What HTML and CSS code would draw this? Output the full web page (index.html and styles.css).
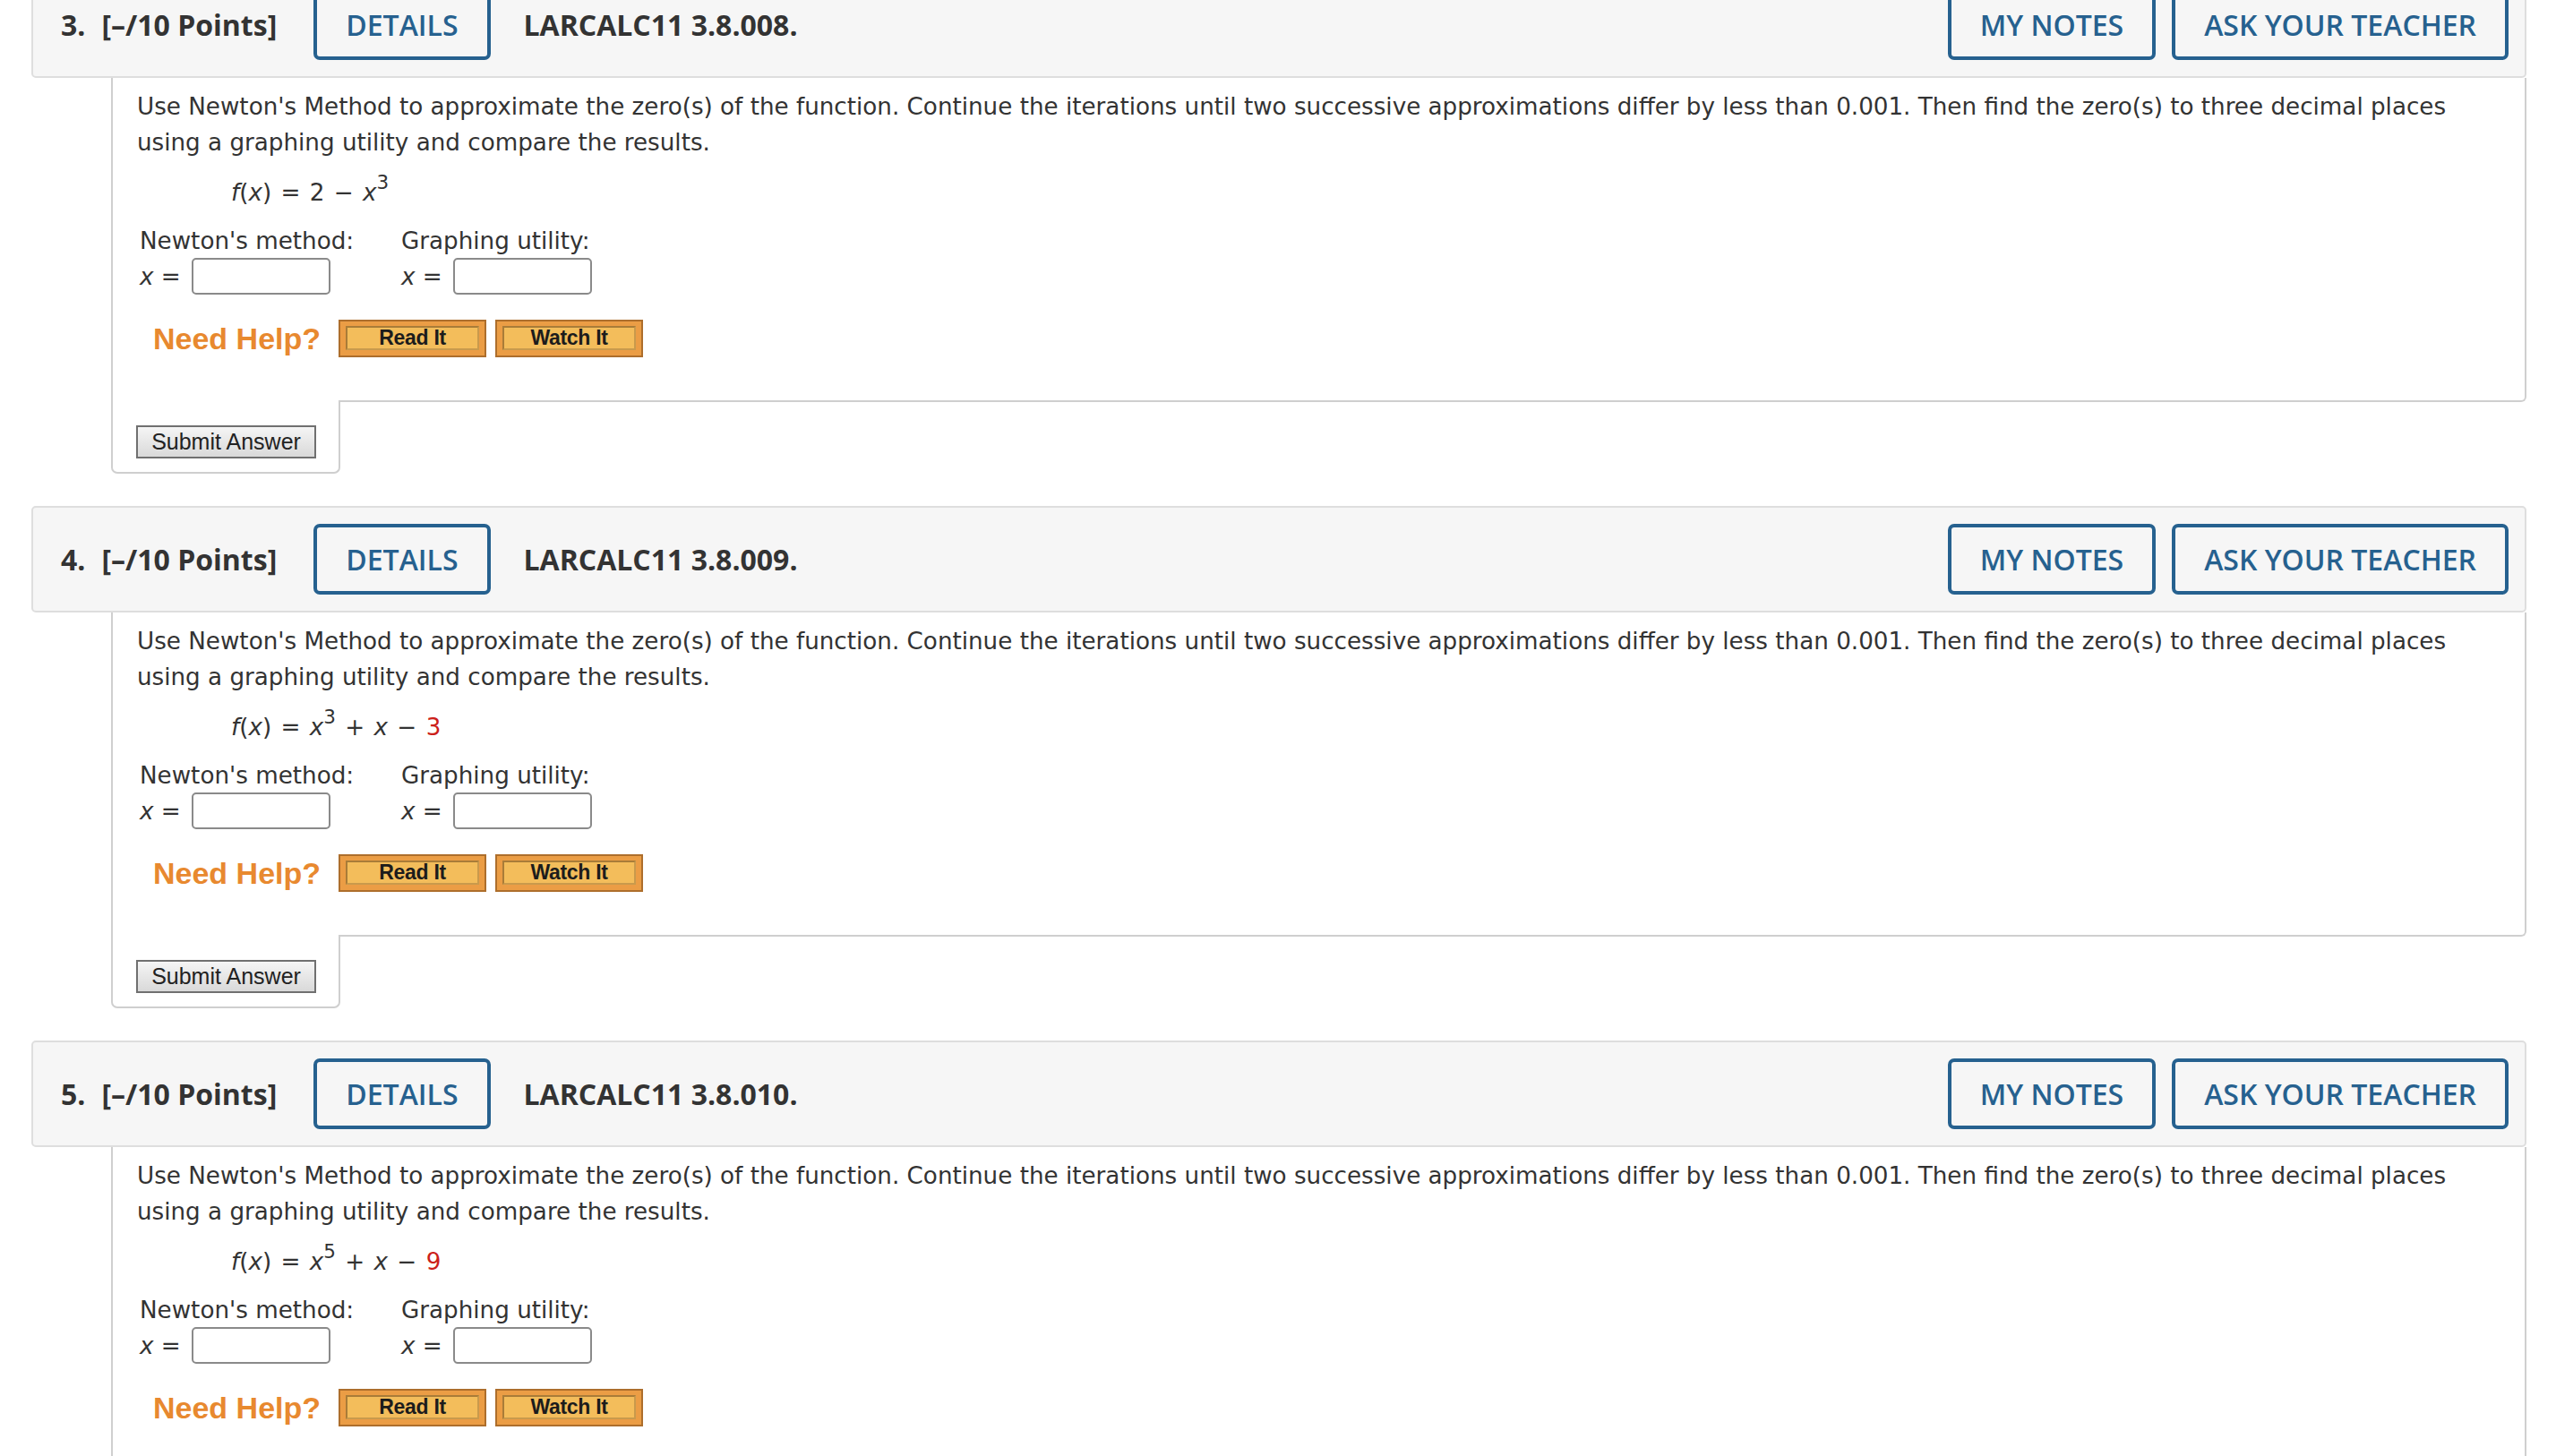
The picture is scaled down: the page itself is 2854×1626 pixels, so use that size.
FILE: index.html
```html
<!DOCTYPE html>
<html lang="en">
<head>
<meta charset="utf-8">
<title>Questions</title>
<link rel="stylesheet" href="styles.css">
</head>
<body>
<div class="page">

  <section class="q">
    <div class="qhead">
      <span class="qnum">3.</span><span class="pts">[–/10 Points]</span>
      <button class="btn details">DETAILS</button>
      <span class="qref">LARCALC11 3.8.008.</span>
      <span class="spacer"></span>
      <button class="btn notes">MY NOTES</button>
      <button class="btn">ASK YOUR TEACHER</button>
    </div>
    <div class="qbody">
      <p class="prompt">Use Newton's Method to approximate the zero(s) of the function. Continue the iterations until two successive approximations differ by less than 0.001. Then find the zero(s) to three decimal places using a graphing utility and compare the results.</p>
      <div class="formula"><i>f</i>(<i>x</i>) = 2 − <i>x</i><sup>3</sup></div>
      <div class="answers">
        <div class="col col1"><div class="lab">Newton's method:</div><div class="xrow"><span class="xeq"><i>x</i> =</span><input class="ans" type="text"></div></div>
        <div class="col"><div class="lab">Graphing utility:</div><div class="xrow"><span class="xeq"><i>x</i> =</span><input class="ans" type="text"></div></div>
      </div>
      <div class="help">
        <span class="need">Need Help?</span>
        <span class="hbtn"><span>Read It</span></span>
        <span class="hbtn"><span>Watch It</span></span>
      </div>
    </div>
    <div class="qfoot"><button class="submit">Submit Answer</button></div>
  </section>

  <section class="q">
    <div class="qhead">
      <span class="qnum">4.</span><span class="pts">[–/10 Points]</span>
      <button class="btn details">DETAILS</button>
      <span class="qref">LARCALC11 3.8.009.</span>
      <span class="spacer"></span>
      <button class="btn notes">MY NOTES</button>
      <button class="btn">ASK YOUR TEACHER</button>
    </div>
    <div class="qbody">
      <p class="prompt">Use Newton's Method to approximate the zero(s) of the function. Continue the iterations until two successive approximations differ by less than 0.001. Then find the zero(s) to three decimal places using a graphing utility and compare the results.</p>
      <div class="formula"><i>f</i>(<i>x</i>) = <i>x</i><sup>3</sup> + <i>x</i> − <span class="red">3</span></div>
      <div class="answers">
        <div class="col col1"><div class="lab">Newton's method:</div><div class="xrow"><span class="xeq"><i>x</i> =</span><input class="ans" type="text"></div></div>
        <div class="col"><div class="lab">Graphing utility:</div><div class="xrow"><span class="xeq"><i>x</i> =</span><input class="ans" type="text"></div></div>
      </div>
      <div class="help">
        <span class="need">Need Help?</span>
        <span class="hbtn"><span>Read It</span></span>
        <span class="hbtn"><span>Watch It</span></span>
      </div>
    </div>
    <div class="qfoot"><button class="submit">Submit Answer</button></div>
  </section>

  <section class="q">
    <div class="qhead">
      <span class="qnum">5.</span><span class="pts">[–/10 Points]</span>
      <button class="btn details">DETAILS</button>
      <span class="qref">LARCALC11 3.8.010.</span>
      <span class="spacer"></span>
      <button class="btn notes">MY NOTES</button>
      <button class="btn">ASK YOUR TEACHER</button>
    </div>
    <div class="qbody">
      <p class="prompt">Use Newton's Method to approximate the zero(s) of the function. Continue the iterations until two successive approximations differ by less than 0.001. Then find the zero(s) to three decimal places using a graphing utility and compare the results.</p>
      <div class="formula"><i>f</i>(<i>x</i>) = <i>x</i><sup>5</sup> + <i>x</i> − <span class="red">9</span></div>
      <div class="answers">
        <div class="col col1"><div class="lab">Newton's method:</div><div class="xrow"><span class="xeq"><i>x</i> =</span><input class="ans" type="text"></div></div>
        <div class="col"><div class="lab">Graphing utility:</div><div class="xrow"><span class="xeq"><i>x</i> =</span><input class="ans" type="text"></div></div>
      </div>
      <div class="help">
        <span class="need">Need Help?</span>
        <span class="hbtn"><span>Read It</span></span>
        <span class="hbtn"><span>Watch It</span></span>
      </div>
    </div>
    <div class="qfoot"><button class="submit">Submit Answer</button></div>
  </section>

</div>
</body>
</html>
```

FILE: styles.css
```css
html, body {
  margin: 0;
  padding: 0;
  background: #ffffff;
}

body {
  font-family: "DejaVu Sans", Verdana, sans-serif;
  color: #333333;
  overflow: hidden;
}

.page {
  margin: -32px 33px 0 35px;
}

.q {
  margin-bottom: 36px;
}

/* ---------- header bar ---------- */
.qhead {
  display: flex;
  align-items: center;
  background: #f6f6f6;
  border: 2px solid #dedede;
  border-radius: 5px;
  padding: 18px 18px 18px 31px;
  font-family: "Open Sans", sans-serif;
}

.qnum,
.pts,
.qref {
  font-family: "Open Sans", sans-serif;
  font-size: 32px;
  font-weight: 700;
  color: #333333;
  white-space: nowrap;
}

.qnum {
  margin-right: 18px;
}

.btn {
  height: 79px;
  box-sizing: border-box;
  border: 4px solid #26618f;
  border-radius: 7px;
  background: transparent;
  color: #26618f;
  font-family: "Open Sans", sans-serif;
  font-size: 32px;
  font-weight: 600;
  padding: 0 32px;
  white-space: nowrap;
  cursor: pointer;
}

.details {
  margin-left: 41px;
}

.qref {
  margin-left: 37px;
}

.spacer {
  flex: 1;
}

.notes {
  margin-right: 18px;
}

/* ---------- body ---------- */
.qbody {
  margin-left: 89px;
  border: 2px solid #cfcfcf;
  border-top: none;
  border-bottom-right-radius: 6px;
  padding: 12px 60px 48px 27px;
  font-size: 26.2px;
  line-height: 40px;
  background: #ffffff;
}

.prompt {
  margin: 0;
}

.formula {
  margin: 16px 0 0 105px;
  height: 40px;
  line-height: 40px;
  word-spacing: 2px;
}

.formula sup {
  font-size: 0.82em;
  line-height: 0;
  vertical-align: 0.62em;
}

.red {
  color: #cc1f1a;
}

.answers {
  display: flex;
  margin: 14px 0 0 3px;
}

.col1 {
  width: 292px;
}

.lab {
  height: 39px;
  line-height: 40px;
  white-space: nowrap;
}

.xrow {
  display: flex;
  align-items: center;
  height: 41px;
}

.xeq {
  white-space: nowrap;
  margin-right: 12px;
}

.ans {
  width: 155px;
  height: 41px;
  box-sizing: border-box;
  border: 2px solid #8a8a8a;
  border-radius: 5px;
  background: #ffffff;
  margin: 0;
  padding: 0 6px;
  font-size: 22px;
}

/* ---------- help row ---------- */
.help {
  display: flex;
  align-items: center;
  margin: 28px 0 0 18px;
  height: 42px;
}

.need {
  font-family: "Liberation Sans", Arial, sans-serif;
  font-weight: 700;
  font-size: 34px;
  color: #e8892f;
  margin-right: 20px;
  white-space: nowrap;
}

.hbtn {
  display: flex;
  width: 165px;
  height: 42px;
  box-sizing: border-box;
  border: 2px solid #ad6e2c;
  background: #eb9d45;
  padding: 5px 6px 6px 6px;
  margin-right: 10px;
}

.hbtn span {
  flex: 1;
  display: flex;
  align-items: center;
  justify-content: center;
  border: 2px solid #a97c38;
  border-right-color: #c99a4c;
  border-bottom-color: #c99a4c;
  background: #f3bd5b;
  font-family: "Liberation Sans", Arial, sans-serif;
  font-weight: 700;
  font-size: 23px;
  letter-spacing: -0.3px;
  line-height: 1;
  color: #1c1c1c;
}

/* ---------- submit tab ---------- */
.qfoot {
  width: 256px;
  box-sizing: border-box;
  margin: -2px 0 0 89px;
  border: 2px solid #cfcfcf;
  border-top: none;
  border-radius: 0 0 7px 7px;
  background: #ffffff;
  padding: 28px 0 15px 26px;
}

.submit {
  display: block;
  width: 201px;
  height: 37px;
  box-sizing: border-box;
  border: 2px solid #707070;
  border-radius: 0;
  background: linear-gradient(#f5f5f5, #d9d9d9);
  font-family: "Liberation Sans", Arial, sans-serif;
  font-size: 25px;
  color: #222222;
  padding: 0;
  line-height: 1;
}
```
